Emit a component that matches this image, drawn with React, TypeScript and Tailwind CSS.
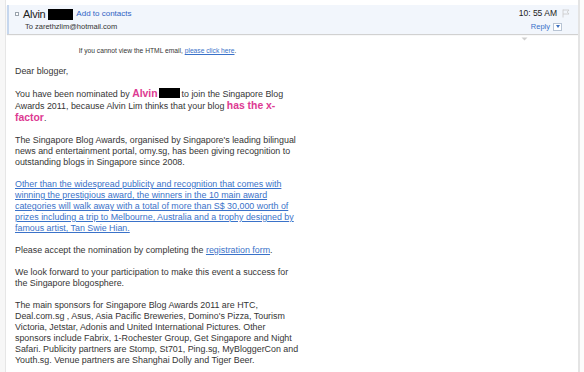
import React from 'react';

const pink = 'text-[#dd3a92] font-bold text-[10.4px]';
const link = 'text-[#3a72c9] underline';

function Flag() {
  return (
    <svg width="8" height="9" viewBox="0 0 8 9" className="shrink-0">
      <path d="M1 0.5 V8.5 M1 1 H7 L5.2 3 L7 5 H1" fill="none" stroke="#c9c9c9" strokeWidth="0.8" />
    </svg>
  );
}

export default function App() {
  return (
    <div className="relative w-[584px] h-[372px] overflow-hidden bg-white flex font-['Liberation_Sans',Arial,sans-serif] text-[#353535]">
      {/* left gutter */}
      <div className="w-[6px] shrink-0 bg-[#f7f7f7] border-r border-[#e6e6e6]" />

      <div className="w-[572px] shrink-0 flex flex-col">
        {/* Header */}
        <div className="mt-[5px] ml-[1px] h-[29px] bg-[#f2f6fc] border-l-2 border-[#c6d7ee] shadow-[0_1px_1px_rgba(0,0,0,0.18)] flex justify-between">
          <div className="pl-[6px] pt-[2px] flex flex-col">
            <div className="flex items-center h-[14px]">
              <span className="w-[4px] h-[4px] border border-[#9aa3ad] bg-white mr-[4px]" />
              <span className="text-[11px] text-[#222] font-medium tracking-[-0.3px]">Alvin</span>
              <span className="w-[25px] h-[11px] bg-black ml-[3px] mr-[3px]" />
              <span className="text-[8px] text-[#2f63c4]">Add to contacts</span>
            </div>
            <div className="pl-[10px] text-[7.5px] text-[#333] leading-[10px] mt-[1px]">To zarethzlim@hotmail.com</div>
          </div>
          <div className="pr-[8px] pt-[3px] flex flex-col items-end">
            <div className="flex items-center h-[10px] gap-[5px]">
              <span className="text-[8.5px] text-[#222]">10: 55 AM</span>
              <Flag />
            </div>
            <div className="flex items-center mt-[3px] mr-[8px] gap-[3px]">
              <span className="text-[7.5px] text-[#3a72c9]">Reply</span>
              <span className="w-[9px] h-[8px] border border-[#b8c4d4] bg-white flex items-center justify-center">
                <span className="w-0 h-0 border-l-[2px] border-r-[2px] border-t-[3px] border-l-transparent border-r-transparent border-t-[#3a6fc0]" />
              </span>
            </div>
          </div>
        </div>

        {/* small chevron */}
        <div className="flex justify-end pr-[50px] mt-[3px] h-[4px]">
          <svg width="7" height="4" viewBox="0 0 7 4">
            <path d="M0.5 0.5 H6.5 L3.5 3.5 Z" fill="#cfcfcf" />
          </svg>
        </div>

        {/* Body */}
        <div className="w-[285px] ml-[9px] mt-[5px]">
          <p className="text-center text-[6.7px] leading-[9px]">
            If you cannot view the HTML email, <span className={link}>please click here</span>.
          </p>
          <div className="mt-[11px] text-[8.9px] leading-[11px] flex flex-col gap-[11px]">
            <p>Dear blogger,</p>
            <p>
              You have been nominated by <span className={pink}>Alvin</span>
              <span className="inline-block w-[21px] h-[10px] bg-black align-[-1px] ml-[1px] mr-[2px]" />
              to join the Singapore Blog Awards 2011, because Alvin Lim thinks that your blog{' '}
              <span className={pink}>has the x-factor</span>.
            </p>
            <p>
              The Singapore Blog Awards, organised by Singapore's leading bilingual news and entertainment portal,
              omy.sg, has been giving recognition to outstanding blogs in Singapore since 2008.
            </p>
            <p className={link}>
              Other than the widespread publicity and recognition that comes with winning the prestigious award, the
              winners in the 10 main award categories will walk away with a total of more than S$ 30,000 worth of
              prizes including a trip to Melbourne, Australia and a trophy designed by famous artist, Tan Swie Hian.
            </p>
            <p>
              Please accept the nomination by completing the <span className={link}>registration form</span>.
            </p>
            <p>We look forward to your participation to make this event a success for the Singapore blogosphere.</p>
            <p>
              The main sponsors for Singapore Blog Awards 2011 are HTC, Deal.com.sg , Asus, Asia Pacific Breweries,
              Domino's Pizza, Tourism Victoria, Jetstar, Adonis and United International Pictures. Other sponsors
              include Fabrix, 1-Rochester Group, Get Singapore and Night Safari. Publicity partners are Stomp, St701,
              Ping.sg, MyBloggerCon and Youth.sg. Venue partners are Shanghai Dolly and Tiger Beer.
            </p>
          </div>
        </div>
      </div>

      {/* right edge */}
      <div className="w-[2px] shrink-0 bg-[#e4e4e4]" />
      <div className="flex-1 bg-[#fcfcfc]" />
    </div>
  );
}
